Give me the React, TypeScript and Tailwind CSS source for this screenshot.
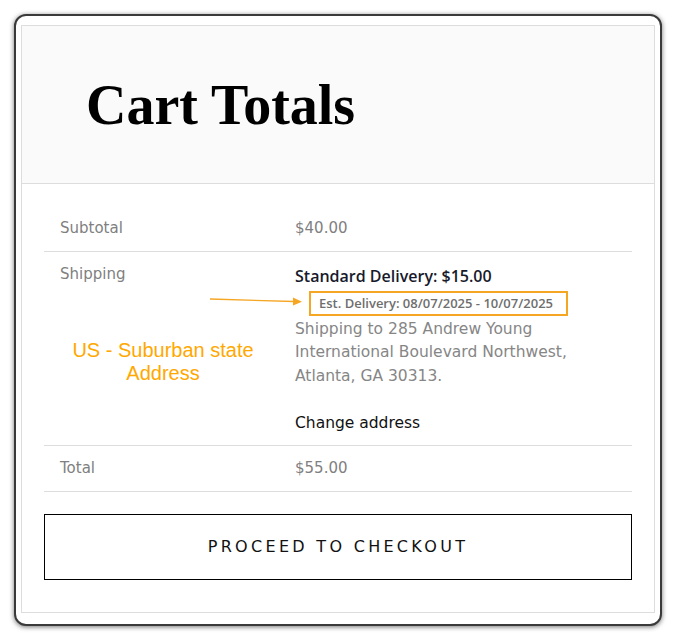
import React from "react";

const sans = { fontFamily: '"DejaVu Sans", "Noto Sans", sans-serif' } as const;
const semi = { fontFamily: '"Open Sans", "Noto Sans", sans-serif' } as const;

export default function App() {
  return (
    <div className="w-[676px] h-[637px] bg-white pt-[14px] pl-[14px]">
      <div className="w-[648px] h-[612px] rounded-[12px] border-2 border-[#3a3a3a] shadow-[0_1px_5px_rgba(0,0,0,0.55)] bg-white pt-[9px] px-[5px]">
        <div className="h-[588px] border border-[#dddddd] bg-white" style={sans}>
          <div className="h-[158px] bg-[#fafafa] border-b border-[#dddddd] flex items-center pl-[64px]">
            <h1
              className="text-[56px] leading-[56px] font-bold text-black"
              style={{ fontFamily: '"Liberation Serif", "DejaVu Serif", serif' }}
            >
              Cart Totals
            </h1>
          </div>
          <div className="px-[22px] pt-[22px]">
            <div className="flex border-b border-[#dddddd] py-[12px] text-[15px] leading-[21px] text-[#808080]">
              <div className="w-[251px] pl-[16px]">Subtotal</div>
              <div>$40.00</div>
            </div>
            <div className="relative flex border-b border-[#dddddd] text-[15px]">
              <div className="w-[251px] pl-[16px] pt-[11.5px] leading-[21px] text-[#808080]">Shipping</div>
              <div className="pt-[14px] pb-[10px]">
                <div className="leading-[21px] font-semibold text-[16px] text-[#171a2c]" style={semi}>
                  Standard Delivery: $15.00
                </div>
                <div
                  className="mt-[4px] ml-[14px] w-[259px] border-2 border-[#f5a623] pl-[8px] text-[13px] leading-[21px] font-semibold text-[#6e6e6e] whitespace-nowrap"
                  style={semi}
                >
                  Est. Delivery: 08/07/2025 - 10/07/2025
                </div>
                <div className="mt-[1.5px] text-[15.5px] leading-[23.5px] text-[#868686]">
                  Shipping to 285 Andrew Young
                  <br />
                  International Boulevard Northwest,
                  <br />
                  Atlanta, GA 30313.
                  <br />
                  <br />
                  <span className="text-[#111111]">Change address</span>
                </div>
              </div>
              <svg className="absolute left-[164px] top-[42px]" width="96" height="14" viewBox="0 0 96 14">
                <line x1="2" y1="5" x2="86" y2="7.5" stroke="#f5a623" strokeWidth="1.3" />
                <polygon points="85,3.5 94,7.8 85,11.5" fill="#f5a623" />
              </svg>
              <div
                className="absolute left-[19px] top-[87px] w-[200px] text-center text-[20px] leading-[23px] text-[#ffa800]"
                style={{ fontFamily: '"Liberation Sans", Arial, sans-serif' }}
              >
                US - Suburban state
                <br />
                Address
              </div>
            </div>
            <div className="flex border-b border-[#dddddd] py-[12px] text-[15px] leading-[21px] text-[#808080]">
              <div className="w-[251px] pl-[16px]">Total</div>
              <div>$55.00</div>
            </div>
            <button className="mt-[22px] w-full h-[66px] border border-black bg-white flex items-center justify-center text-[16px] tracking-[3.3px] text-[#111111]">
              PROCEED TO CHECKOUT
            </button>
          </div>
        </div>
      </div>
    </div>
  );
}
